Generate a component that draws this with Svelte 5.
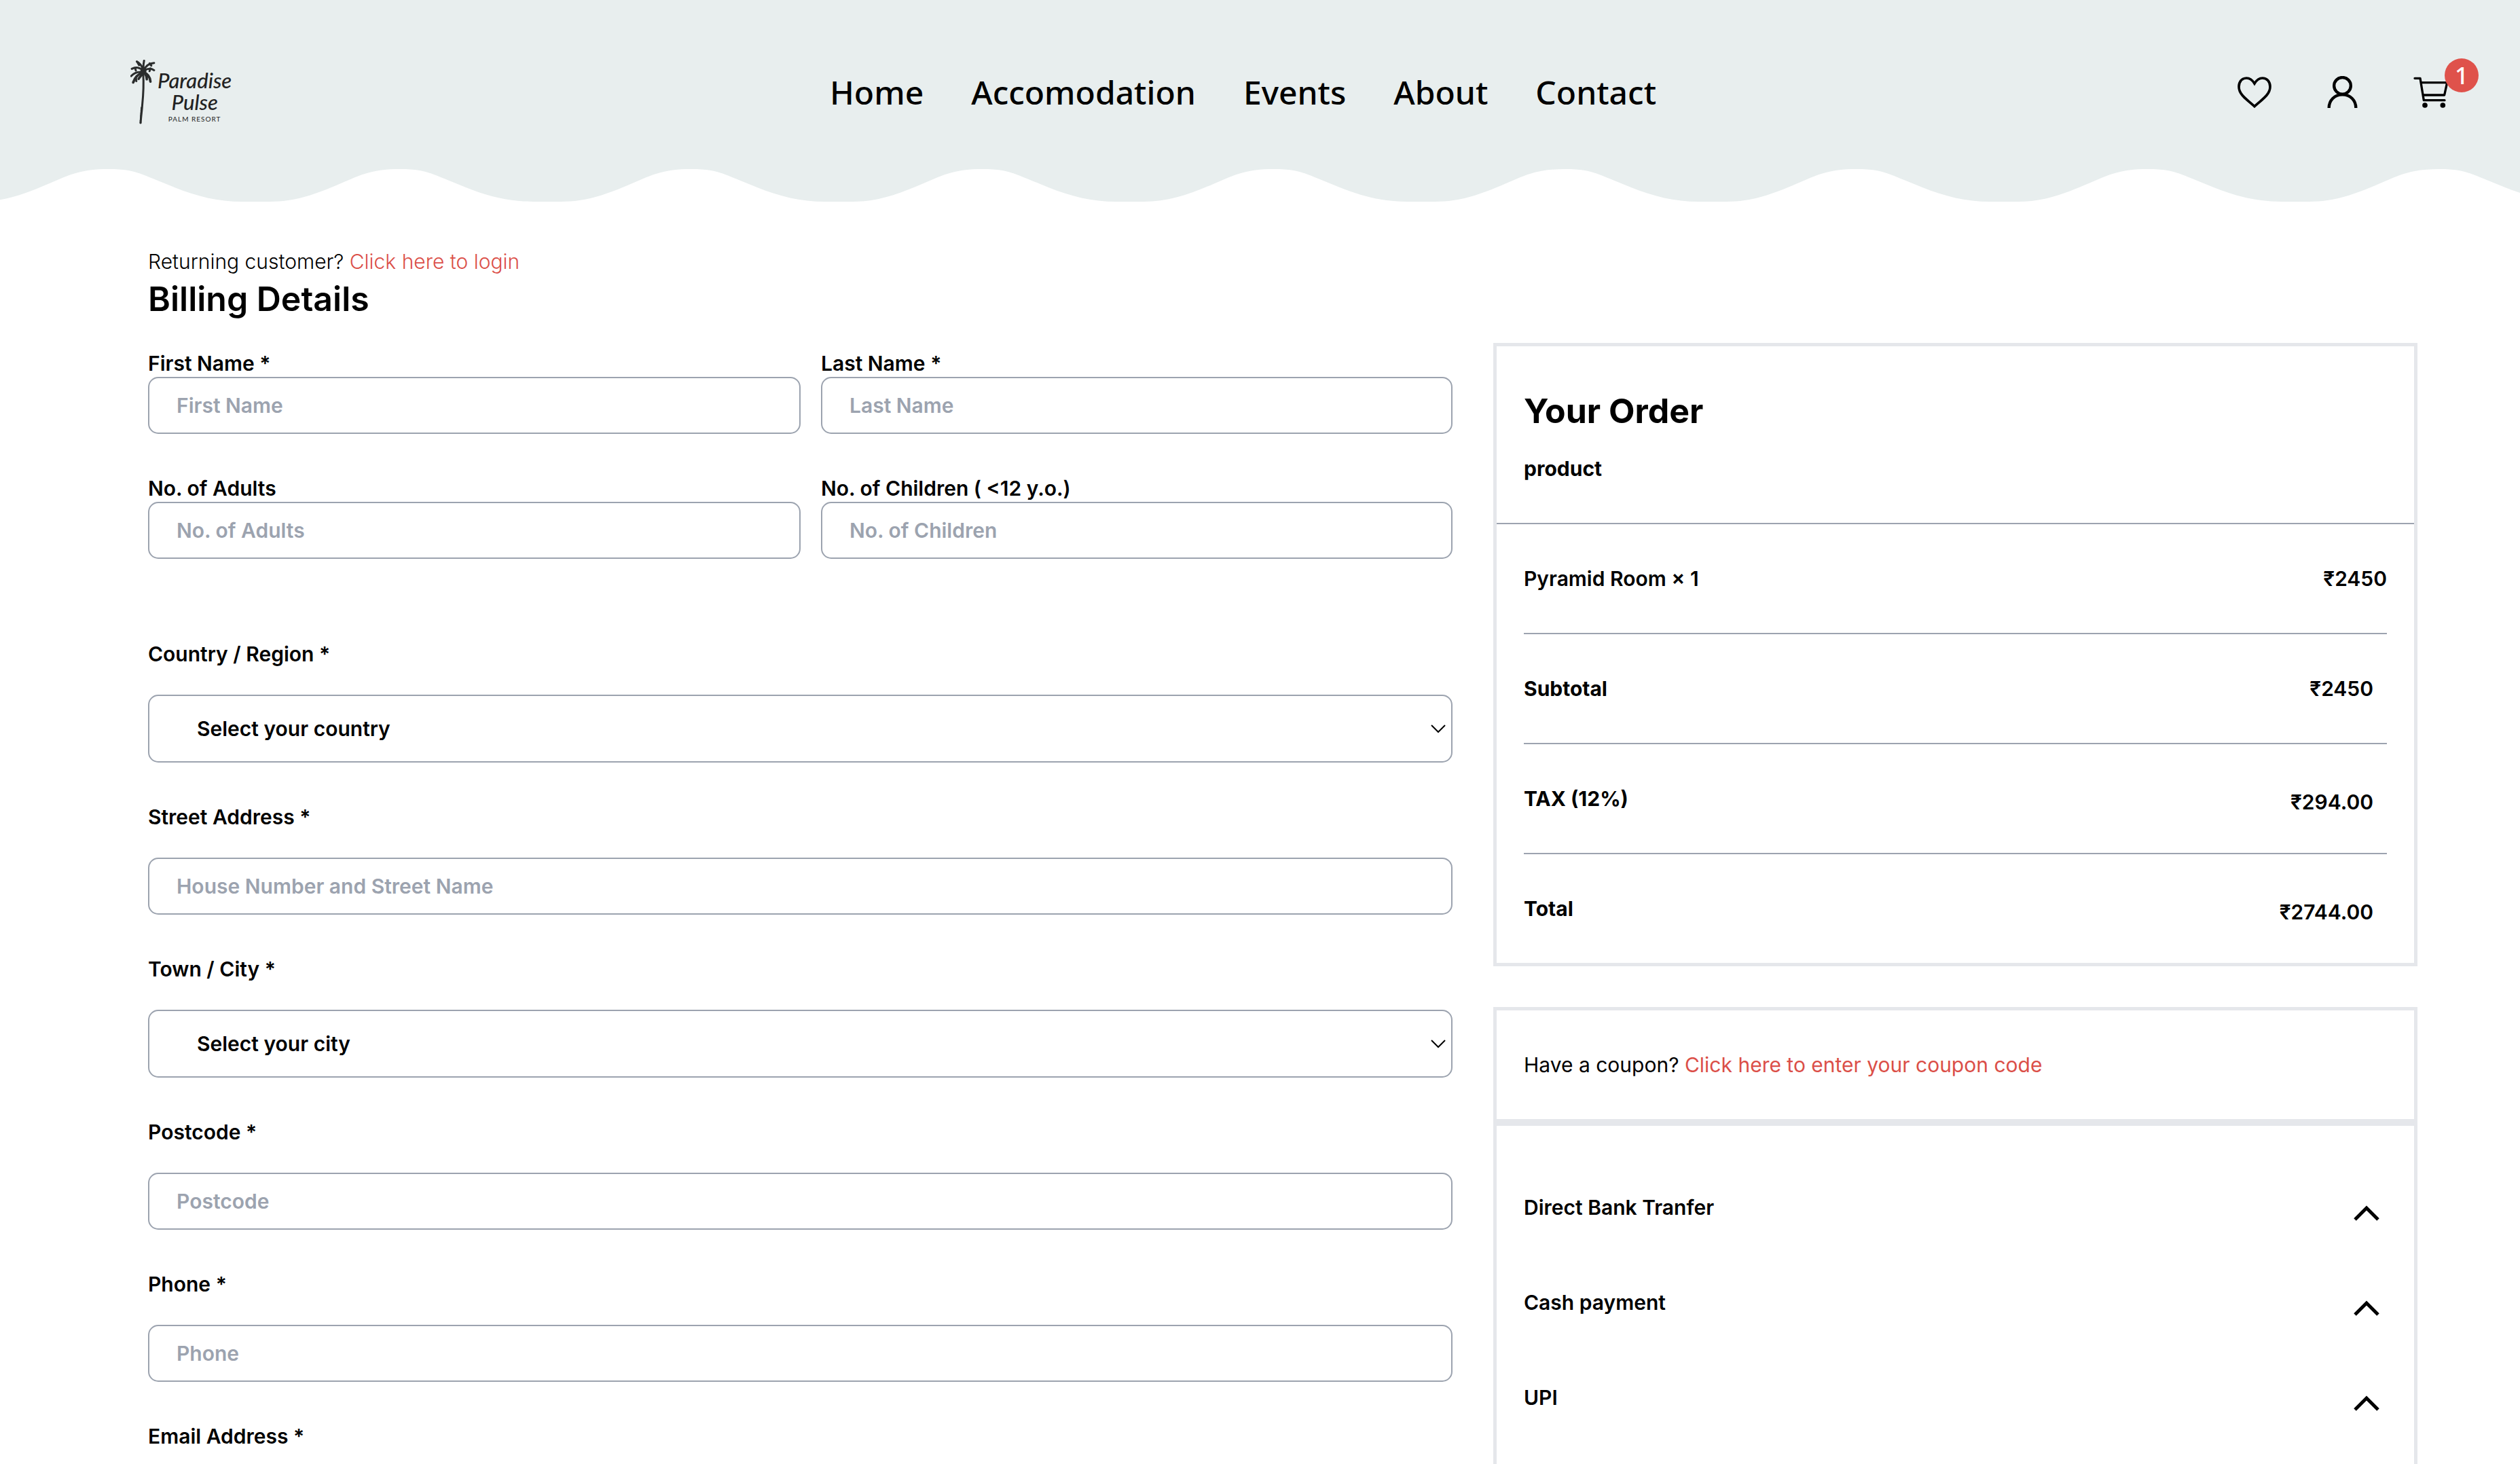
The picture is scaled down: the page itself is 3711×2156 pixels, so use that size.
<script>
  const nav = ['Home', 'Accomodation', 'Events', 'About', 'Contact'];

  const pairs = [
    { id: 'first-name', label: 'First Name *', placeholder: 'First Name' },
    { id: 'last-name', label: 'Last Name *', placeholder: 'Last Name' },
    { id: 'adults', label: 'No. of Adults', placeholder: 'No. of Adults' },
    { id: 'children', label: 'No. of Children ( <12 y.o.)', placeholder: 'No. of Children' }
  ];

  const fields = [
    { id: 'country', label: 'Country / Region *', select: 'Select your country' },
    { id: 'street', label: 'Street Address *', placeholder: 'House Number and Street Name' },
    { id: 'city', label: 'Town / City *', select: 'Select your city' },
    { id: 'postcode', label: 'Postcode *', placeholder: 'Postcode' },
    { id: 'phone', label: 'Phone *', placeholder: 'Phone' },
    { id: 'email', label: 'Email Address *', placeholder: 'Email Address' }
  ];

  const lines = [
    { name: 'Pyramid Room × 1', price: '₹2450', kind: '' },
    { name: 'Subtotal', price: '₹2450', kind: 'inset' },
    { name: 'TAX (12%)', price: '₹294.00', kind: 'inset low' },
    { name: 'Total', price: '₹2744.00', kind: 'inset low' }
  ];

  const payments = ['Direct Bank Tranfer', 'Cash payment', 'UPI'];

  // Scalloped lower edge of the header: one crest-to-crest curve, repeated.
  const period = 429;
  const start = 160 - period;
  let wave = `M${start} 0`;
  for (let i = 0; i < 10; i++) {
    wave += 'c35 0 45 6 70 16l27 11c33 13 63 21 100 21h40c38 0 68 -11 105 -27l21 -9c22 -9 41 -12 66 -12';
  }
  wave += 'z';
</script>

<header>
  <div class="bar">
    <a class="logo" href="#home" aria-label="Paradise Pulse Palm Resort">
      <svg class="palm" viewBox="0 0 110 284" aria-hidden="true">
        <g fill="none" stroke="#2b2d2d" stroke-linecap="round">
          <path d="M56 60C60 120 56 160 52 200C50 230 46 250 45 278" stroke-width="9" />
          <path d="M48 210L43 278" stroke-width="6" stroke-dasharray="7 4" />
          <path d="M54 48C44 34 24 30 6 40M56 44C50 26 40 14 28 8M57 42C56 24 58 14 60 4M60 44C68 26 84 16 104 14M60 48C76 38 92 38 104 46M54 54C36 52 16 56 3 72" stroke-width="9" />
          <path d="M54 56C36 62 20 76 12 100M60 56C76 62 86 76 88 96M56 58C48 70 42 74 36 84M62 58C68 66 72 78 72 86" stroke-width="11" />
          <path d="M30 10L38 24M84 16L92 26M20 36L24 48M88 38L84 50M24 80L26 94" stroke-width="9" />
          <circle cx="57" cy="50" r="8" stroke-width="11" />
        </g>
      </svg>
      <span class="words">
        <span class="script">Paradise</span>
        <span class="script">Pulse</span>
        <span class="resort">PALM RESORT</span>
      </span>
    </a>
    <nav>
      {#each nav as item}
        <a href="#{item.toLowerCase()}">{item}</a>
      {/each}
    </nav>
    <div class="actions">
      <button aria-label="Wishlist">
        <svg class="heart" viewBox="0 0 150 138" aria-hidden="true">
          <path d="M75 30C64 12 50 6 40 6C20 6 6 22 6 44C6 80 44 102 75 131C106 102 144 80 144 44C144 22 130 6 110 6C100 6 86 12 75 30Z" fill="none" stroke="#000" stroke-width="11" />
        </svg>
      </button>
      <button aria-label="Account">
        <svg class="user" viewBox="0 0 132 141" aria-hidden="true">
          <g fill="none" stroke="#000" stroke-width="13">
            <circle cx="66" cy="43" r="37" />
            <path d="M6.500 141C6.500 107 31 82 66 82S125.500 107 125.500 141" />
          </g>
        </svg>
      </button>
      <button class="cart-button" aria-label="Cart, 1 item">
        <svg class="cart" viewBox="0 0 156 138" aria-hidden="true">
          <path d="M6 7H30L46 104H138M33 26H149L137 81H44" fill="none" stroke="#000" stroke-width="10" stroke-linecap="round" stroke-linejoin="round" />
          <circle cx="51" cy="126" r="11.500" />
          <circle cx="130" cy="126" r="11.500" />
        </svg>
        <span class="badge">1</span>
      </button>
    </div>
  </div>
  <svg class="wave" viewBox="0 0 3711 48" preserveAspectRatio="none" aria-hidden="true">
    <path d={wave} fill="#e8eeee" />
  </svg>
</header>

<main>
  <p class="returning">Returning customer? <a href="#login">Click here to login</a></p>
  <h1>Billing Details</h1>
  <div class="columns">
    <form>
      <div class="pairs">
        {#each pairs as f}
          <div>
            <label for={f.id}>{f.label}</label>
            <input id={f.id} type="text" placeholder={f.placeholder} />
          </div>
        {/each}
      </div>
      {#each fields as f}
        <div class="field">
          <label for={f.id}>{f.label}</label>
          {#if f.select}
            <div class="select">
              <select id={f.id}><option>{f.select}</option></select>
              <svg viewBox="0 0 22 13" aria-hidden="true">
                <path d="M1 1L11 11L21 1" fill="none" stroke="#000" stroke-width="2" />
              </svg>
            </div>
          {:else}
            <input id={f.id} type="text" placeholder={f.placeholder} />
          {/if}
        </div>
      {/each}
    </form>

    <aside>
      <section class="card order">
        <div class="head">
          <h2>Your Order</h2>
          <p>product</p>
        </div>
        <dl>
          {#each lines as l}
            <div class="line {l.kind}">
              <dt>{l.name}</dt>
              <dd>{l.price}</dd>
            </div>
          {/each}
        </dl>
      </section>
      <section class="card coupon">
        <p>Have a coupon? <a href="#coupon">Click here to enter your coupon code</a></p>
      </section>
      <section class="card payments">
        {#each payments as p}
          <button class="payment">
            <span>{p}</span>
            <svg viewBox="0 0 60 60" aria-hidden="true">
              <path d="M13 48L30 31L47 48" fill="none" stroke="#000" stroke-width="5" />
            </svg>
          </button>
        {/each}
      </section>
    </aside>
  </div>
</main>

<style>
  :global(body) {
    margin: 0;
    background: #fff;
    color: #000;
    font: 600 30px/40px Inter, 'Noto Sans', sans-serif;
  }
  :global(html) { scrollbar-width: none; }
  :global(*) { box-sizing: border-box; }
  h1, h2, p, dl, dt, dd { margin: 0; }
  a { color: inherit; text-decoration: none; }
  button { padding: 0; border: 0; background: none; color: inherit; font: inherit; }
  svg { display: block; flex: none; }

  .bar {
    display: flex;
    align-items: center;
    justify-content: space-between;
    height: 249px;
    padding: 22px 61px 0 192px;
    background: #e8eeee;
  }
  .wave { width: 100%; height: 48px; }
  .logo { display: flex; width: 174px; gap: 3px; color: #222; }
  .palm { width: 37px; height: 95px; }
  .words { display: flex; flex-direction: column; align-items: center; padding-top: 14px; }
  .script { font: italic 500 31px/32px Lato, sans-serif; }
  .resort { font: 400 10px/18px Lato, sans-serif; letter-spacing: 1px; white-space: nowrap; }
  nav { display: flex; gap: 70px; font: 500 48px/68px 'Noto Sans', sans-serif; }
  .actions { display: flex; align-items: center; gap: 82px; }
  .heart { width: 50px; height: 46px; }
  .user { width: 45px; height: 47px; }
  .cart { width: 52px; height: 46px; }
  .cart-button { position: relative; padding-right: 44px; }
  .badge {
    position: absolute;
    top: -27px;
    right: 0;
    width: 50px;
    height: 50px;
    border-radius: 50%;
    background: #df524b;
    color: #fff;
    font: 500 35px/50px 'Noto Sans', sans-serif;
    text-align: center;
  }

  main { padding: 68px 151px 0 218px; }
  main p a { color: #db4f48; }
  .returning { font-weight: 300; }
  h1, h2 { font-size: 50px; line-height: 70px; font-weight: 600; }
  h2, .head p, .inset dt { font-weight: 700; }
  .columns {
    display: grid;
    grid-template-columns: minmax(0, 1921fr) minmax(0, 1361fr);
    gap: 60px;
    align-items: start;
    padding-top: 30px;
  }
  form { padding-top: 10px; }
  label { display: block; }
  input, select {
    display: block;
    width: 100%;
    height: 84px;
    margin: 0;
    padding: 0 40px;
    border: 2px solid #9ca3af;
    border-radius: 15px;
    background: #fff;
    color: #000;
    font: inherit;
  }
  input::placeholder { color: #9ca3af; opacity: 1; }
  .pairs {
    display: grid;
    grid-template-columns: 961fr 930fr;
    gap: 60px 30px;
    padding-bottom: 120px;
  }
  .field { display: flex; flex-direction: column; gap: 40px; padding-bottom: 60px; }
  .select { display: grid; align-items: center; }
  .select > * { grid-area: 1 / 1; }
  .select svg { width: 22px; height: 13px; justify-self: end; margin-right: 10px; pointer-events: none; }
  select { height: 100px; padding: 0 70px; appearance: none; }

  .card { border: 5px solid #e5e7eb; }
  .head { padding: 60px 40px; border-bottom: 2px solid #9ca3af; }
  .head p { padding-top: 30px; }
  dl { padding: 0 40px; }
  .line { display: flex; align-items: center; justify-content: space-between; height: 162px; border-bottom: 2px solid #9ca3af; }
  .line:last-child { height: 160px; border-bottom: 0; }
  .inset dd { padding-right: 20px; }
  .low dd { padding-top: 10px; }
  .coupon { margin-top: 60px; padding: 60px 40px; font-weight: 400; }
  .coupon + .card { padding: 50px 40px; }
  .payment { display: flex; align-items: center; justify-content: space-between; width: 100%; height: 140px; text-align: left; }
  .payment svg { width: 60px; height: 60px; }
</style>
